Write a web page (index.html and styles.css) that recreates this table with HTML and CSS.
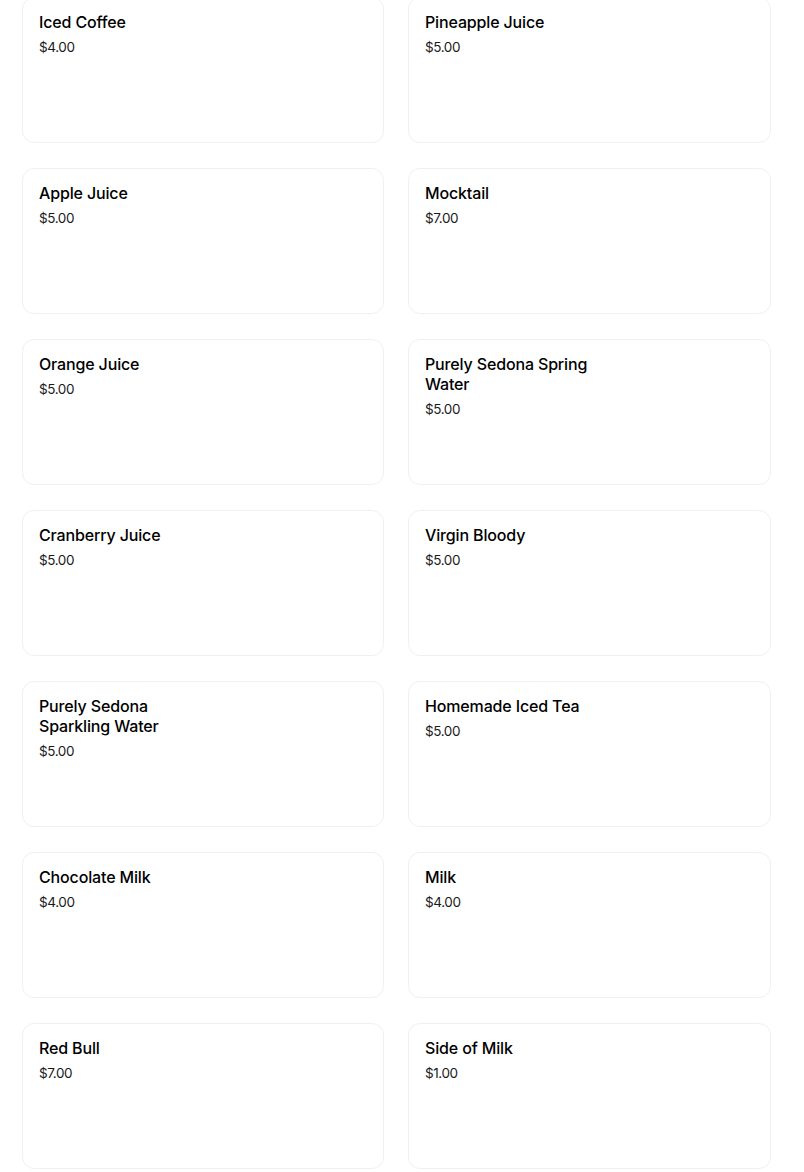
FILE: index.html
```html
<!DOCTYPE html>
<html lang="en">
<head>
<meta charset="utf-8">
<title>Drinks</title>
<link rel="stylesheet" href="styles.css">
</head>
<body>
<main class="menu-grid">
  <article class="item"><div class="item-text"><h3 class="item-name">Iced Coffee</h3><p class="item-price">$4.00</p></div></article>
  <article class="item"><div class="item-text"><h3 class="item-name">Pineapple Juice</h3><p class="item-price">$5.00</p></div></article>
  <article class="item"><div class="item-text"><h3 class="item-name">Apple Juice</h3><p class="item-price">$5.00</p></div></article>
  <article class="item"><div class="item-text"><h3 class="item-name">Mocktail</h3><p class="item-price">$7.00</p></div></article>
  <article class="item"><div class="item-text"><h3 class="item-name">Orange Juice</h3><p class="item-price">$5.00</p></div></article>
  <article class="item"><div class="item-text"><h3 class="item-name">Purely Sedona Spring Water</h3><p class="item-price">$5.00</p></div></article>
  <article class="item"><div class="item-text"><h3 class="item-name">Cranberry Juice</h3><p class="item-price">$5.00</p></div></article>
  <article class="item"><div class="item-text"><h3 class="item-name">Virgin Bloody</h3><p class="item-price">$5.00</p></div></article>
  <article class="item"><div class="item-text"><h3 class="item-name">Purely Sedona Sparkling Water</h3><p class="item-price">$5.00</p></div></article>
  <article class="item"><div class="item-text"><h3 class="item-name">Homemade Iced Tea</h3><p class="item-price">$5.00</p></div></article>
  <article class="item"><div class="item-text"><h3 class="item-name">Chocolate Milk</h3><p class="item-price">$4.00</p></div></article>
  <article class="item"><div class="item-text"><h3 class="item-name">Milk</h3><p class="item-price">$4.00</p></div></article>
  <article class="item"><div class="item-text"><h3 class="item-name">Red Bull</h3><p class="item-price">$7.00</p></div></article>
  <article class="item"><div class="item-text"><h3 class="item-name">Side of Milk</h3><p class="item-price">$1.00</p></div></article>
</main>
</body>
</html>
```
FILE: styles.css
```css
html, body {
  margin: 0;
  padding: 0;
  background: #ffffff;
}
body {
  font-family: Inter, "Noto Sans", "Liberation Sans", sans-serif;
  color: #000000;
}
.menu-grid {
  display: grid;
  grid-template-columns: 362px 363px;
  column-gap: 24px;
  row-gap: 25px;
  margin: -3px 0 0 22px;
}
.item {
  box-sizing: border-box;
  height: 146px;
  border: 1px solid #f0f0f0;
  border-radius: 12px;
  padding: 14px 16px;
  display: flex;
}
.item-text {
  max-width: 176px;
}
.item-name {
  margin: 0;
  font-size: 16px;
  line-height: 20px;
  font-weight: 500;
  letter-spacing: -0.15px;
  color: #000000;
}
.item-price {
  margin: 5px 0 0;
  font-size: 13.5px;
  line-height: 20px;
  font-weight: 400;
  color: #1a1a1a;
  letter-spacing: -0.4px;
}
```
